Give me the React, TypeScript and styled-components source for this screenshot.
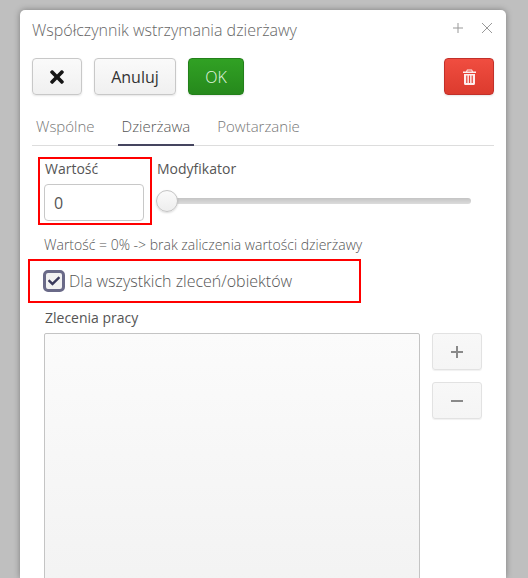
import { createGlobalStyle } from 'styled-components';
import styled from 'styled-components';
import { FaTimes, FaCheck } from 'react-icons/fa';

const GlobalStyle = createGlobalStyle`
  html, body {
    margin: 0;
    height: 578px;
    overflow: hidden;
    background: #bfbfbf;
    font-family: "Open Sans", "Liberation Sans", sans-serif;
  }
`;

const Dialog = styled.div`
  box-sizing: border-box;
  width: 486px;
  height: 568px;
  margin: 10px 0 0 20px;
  padding: 0 12px;
  background: #fff;
  border-radius: 5px 5px 0 0;
  box-shadow: 0 0 6px rgba(0, 0, 0, 0.35);
  overflow: hidden;
`;

const TitleBar = styled.div`
  height: 40px;
  display: flex;
  align-items: center;
  justify-content: space-between;
`;

const Title = styled.div`
  font-size: 16px;
  font-weight: 300;
  color: #666;
`;

const WindowIcons = styled.div`
  display: flex;
  gap: 13px;
  margin: -4px -1px 0 0;
`;

const Toolbar = styled.div`
  display: flex;
  gap: 12px;
  margin-top: 8px;
`;

const ActionButton = styled.button<{ $width: number }>`
  box-sizing: border-box;
  width: ${p => p.$width}px;
  height: 37px;
  padding: 0;
  display: flex;
  align-items: center;
  justify-content: center;
  border: 1px solid #c8c8c8;
  border-radius: 4px;
  background: linear-gradient(#fafafa, #f0f0f0);
  box-shadow: 0 1px 2px rgba(0, 0, 0, 0.1);
  font-family: inherit;
  font-size: 16px;
  color: #333;
`;

const OkButton = styled(ActionButton)`
  border-color: #23801a;
  background: linear-gradient(#31a124, #26891c);
  color: #e4f6e1;
  font-weight: 300;
`;

const DeleteButton = styled(ActionButton)`
  margin-left: auto;
  border-color: #c2302a;
  background: linear-gradient(#f04d40, #dc3b2e);
`;

const Tabs = styled.div`
  display: flex;
  height: 37px;
  margin-top: 14px;
  border-bottom: 1px solid #ddd;
  box-sizing: border-box;
`;

const Tab = styled.div<{ $active?: boolean }>`
  box-sizing: border-box;
  height: 37px;
  padding: 7px 4px 0;
  margin-right: 19px;
  font-size: 15px;
  font-weight: 300;
  color: ${p => (p.$active ? '#555' : '#777')};
  border-bottom: ${p => (p.$active ? '2px solid #45455f' : 'none')};
`;

const ValueRow = styled.div`
  display: flex;
  margin: 11px 0 0 6px;
`;

const ValueBox = styled.div`
  box-sizing: border-box;
  width: 114px;
  height: 68px;
  padding: 0 6px 0 4px;
  border: 2px solid #ff0000;
`;

const FieldLabel = styled.div`
  font-size: 14px;
  line-height: 20px;
  color: #555;
`;

const ValueLabel = styled(FieldLabel)`
  margin: 0 0 5px 1px;
`;

const ValueInput = styled.input`
  box-sizing: border-box;
  display: block;
  width: 100%;
  height: 37px;
  padding: 0 9px;
  border: 1px solid #c8c8c8;
  border-radius: 4px;
  font-family: inherit;
  font-size: 16px;
  color: #555;
`;

const SliderColumn = styled.div`
  flex: 1;
  padding-left: 5px;
`;

const SliderLabel = styled(FieldLabel)`
  margin-top: 2px;
`;

const Slider = styled.div`
  position: relative;
  width: 314px;
  height: 22px;
  margin-top: 11px;
  display: flex;
  align-items: center;
`;

const SliderTrack = styled.div`
  width: 100%;
  height: 6px;
  border-radius: 3px;
  background: linear-gradient(#c4c4c4, #dcdcdc);
`;

const SliderThumb = styled.div`
  position: absolute;
  left: -1px;
  top: 0;
  box-sizing: border-box;
  width: 22px;
  height: 22px;
  border: 1px solid #c4c4c4;
  border-radius: 50%;
  background: linear-gradient(#fafafa, #eeeeee);
  box-shadow: 0 1px 2px rgba(0, 0, 0, 0.15);
`;

const Hint = styled.div`
  margin: 11px 0 0 12px;
  font-size: 14px;
  line-height: 17px;
  font-weight: 300;
  color: #555;
`;

const CheckBoxRow = styled.div`
  box-sizing: border-box;
  display: flex;
  align-items: center;
  gap: 4px;
  width: 333px;
  height: 44px;
  margin: 6px 0 0 -4px;
  padding-left: 13px;
  border: 2px solid #ff0000;
`;

const CheckBox = styled.div`
  box-sizing: border-box;
  width: 22px;
  height: 22px;
  display: flex;
  align-items: center;
  justify-content: center;
  border: 3px solid #6a6a88;
  border-radius: 5px;
  background: #f2f2f2;
  color: #3a3a5c;
`;

const CheckLabel = styled.div`
  font-size: 16px;
  font-weight: 300;
  color: #555;
`;

const OrdersLabel = styled(FieldLabel)`
  margin: 5px 0 5px 13px;
`;

const OrdersRow = styled.div`
  display: flex;
  gap: 12px;
  margin-left: 12px;
`;

const OrdersList = styled.div`
  box-sizing: border-box;
  width: 376px;
  height: 300px;
  border: 1px solid #c4c4c4;
  border-radius: 2px 2px 0 0;
  background: linear-gradient(#fbfbfb, #f1f1f1);
`;

const SideButtons = styled.div`
  display: flex;
  flex-direction: column;
  gap: 12px;
`;

const SideButton = styled.button`
  box-sizing: border-box;
  width: 50px;
  height: 37px;
  padding: 0;
  display: flex;
  align-items: center;
  justify-content: center;
  border: 1px solid #e2e2e2;
  border-radius: 3px;
  background: linear-gradient(#f8f8f8, #f5f5f5);
  box-shadow: 0 1px 1px rgba(0, 0, 0, 0.06);
`;

const TrashIcon = () => (
  <svg width="13" height="16" viewBox="0 0 13 16" fill="#fdeeed">
    <path d="M4 0.5h5l1 2h3v1.5H0V2.5h3zM4.6 1.5l-.4 1h4.6l-.4-1z" fillRule="evenodd" />
    <path
      d="M1 5h11v9.5a1.5 1.5 0 0 1-1.5 1.5h-8A1.5 1.5 0 0 1 1 14.5zM3.2 6.5v7.5h1.2V6.5zM5.9 6.5v7.5h1.2V6.5zM8.6 6.5v7.5h1.2V6.5z"
      fillRule="evenodd"
    />
  </svg>
);

const App = () => {
  return (
    <>
      <GlobalStyle />
      <Dialog>
        <TitleBar>
          <Title>Współczynnik wstrzymania dzierżawy</Title>
          <WindowIcons>
            <svg width="16" height="16" viewBox="0 0 16 16" stroke="#999" fill="none">
              <path d="M8 3v10M3 8h10" />
            </svg>
            <svg width="16" height="16" viewBox="0 0 16 16" stroke="#999" fill="none">
              <path d="M3 3l10 10M13 3L3 13" />
            </svg>
          </WindowIcons>
        </TitleBar>
        <Toolbar>
          <ActionButton type="button" $width={50}>
            <FaTimes size={20} color="#151515" />
          </ActionButton>
          <ActionButton type="button" $width={82}>Anuluj</ActionButton>
          <OkButton type="button" $width={56}>OK</OkButton>
          <DeleteButton type="button" $width={50}>
            <TrashIcon />
          </DeleteButton>
        </Toolbar>
        <Tabs>
          <Tab>Wspólne</Tab>
          <Tab $active>Dzierżawa</Tab>
          <Tab>Powtarzanie</Tab>
        </Tabs>
        <ValueRow>
          <ValueBox>
            <ValueLabel>Wartość</ValueLabel>
            <ValueInput defaultValue="0" />
          </ValueBox>
          <SliderColumn>
            <SliderLabel>Modyfikator</SliderLabel>
            <Slider>
              <SliderTrack />
              <SliderThumb />
            </Slider>
          </SliderColumn>
        </ValueRow>
        <Hint>Wartość = 0% -&gt; brak zaliczenia wartości dzierżawy</Hint>
        <CheckBoxRow>
          <CheckBox>
            <FaCheck size={12} />
          </CheckBox>
          <CheckLabel>Dla wszystkich zleceń/obiektów</CheckLabel>
        </CheckBoxRow>
        <OrdersLabel>Zlecenia pracy</OrdersLabel>
        <OrdersRow>
          <OrdersList />
          <SideButtons>
            <SideButton type="button">
              <svg width="14" height="14" viewBox="0 0 14 14" stroke="#8a8a8a" strokeWidth="2" fill="none">
                <path d="M7 1v12M1 7h12" />
              </svg>
            </SideButton>
            <SideButton type="button">
              <svg width="14" height="14" viewBox="0 0 14 14" stroke="#8a8a8a" strokeWidth="2" fill="none">
                <path d="M1 7h12" />
              </svg>
            </SideButton>
          </SideButtons>
        </OrdersRow>
      </Dialog>
    </>
  );
};

export default App;
